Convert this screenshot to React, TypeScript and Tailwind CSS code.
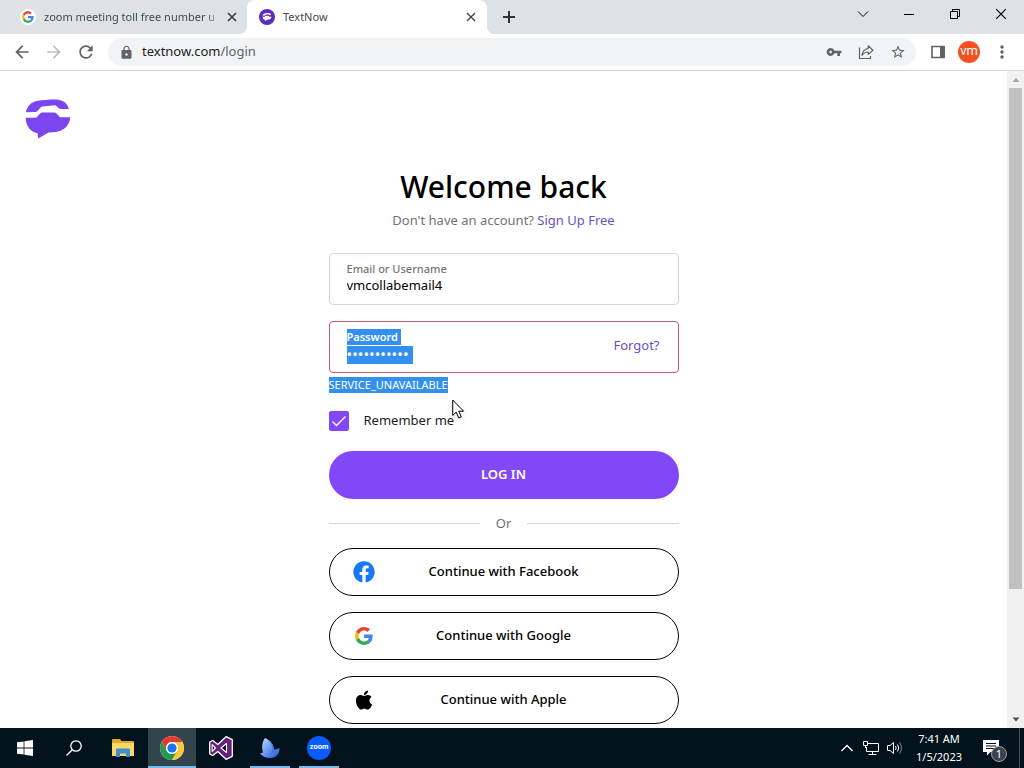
import { useState, type ReactNode } from "react";
import { FaApple, FaFacebook } from "react-icons/fa";
import {
  MdArrowBack,
  MdArrowForward,
  MdLock,
  MdMoreVert,
  MdRefresh,
  MdStarBorder,
  MdVpnKey,
} from "react-icons/md";

function GoogleLogo({ className }: { className: string }) {
  return (
    <svg viewBox="0 0 48 48" className={className} aria-hidden="true">
      <path fill="#EA4335" d="M24 9.5c3.54 0 6.71 1.22 9.21 3.6l6.85-6.85C35.9 2.38 30.47 0 24 0 14.62 0 6.51 5.38 2.56 13.22l7.98 6.19C12.43 13.72 17.74 9.5 24 9.5z" />
      <path fill="#4285F4" d="M46.98 24.55c0-1.57-.15-3.09-.38-4.55H24v9.02h12.94c-.58 2.96-2.26 5.48-4.78 7.18l7.73 6c4.51-4.18 7.09-10.36 7.09-17.65z" />
      <path fill="#FBBC05" d="M10.53 28.59c-.48-1.45-.76-2.99-.76-4.59s.27-3.14.76-4.59l-7.98-6.19C.92 16.46 0 20.12 0 24c0 3.88.92 7.54 2.56 10.78l7.97-6.19z" />
      <path fill="#34A853" d="M24 48c6.48 0 11.93-2.13 15.89-5.81l-7.73-6c-2.15 1.45-4.92 2.3-8.16 2.3-6.26 0-11.57-4.22-13.47-9.91l-7.98 6.19C6.51 42.62 14.62 48 24 48z" />
    </svg>
  );
}

function TextNowMark({ className }: { className: string }) {
  return (
    <svg viewBox="0 0 46 40" className={className} fill="currentColor" aria-hidden="true">
      <path d="M1 13.2C1.800 8 5.800 3 12 2C18 .9 25 .4 31.500 .5C38 .9 42.800 4.600 43.800 10H36C35 10 34.300 9.600 33.600 9L31.300 7Q30.500 6.200 29.500 6.300L17.500 7.400Q16.500 7.500 15.800 8.300L12.300 12.300Q11.500 13.100 10.500 13.100Z" />
      <path d="M.7 18.800H9.500Q11 18.800 11.900 17.900L15.300 14.300Q16 13.600 17 13.600H29.500Q30.500 13.600 31.200 14.300L34.300 17.400Q35.200 18.300 36.700 18.300H45.300C44.800 25.500 39.500 32 31 33L23.500 33.600L13.200 39.400L12.600 34.200C5.500 32.800 1 27.500 .7 18.800Z" />
    </svg>
  );
}

function CloseIcon({ className }: { className: string }) {
  return (
    <svg viewBox="0 0 10 10" className={className} fill="none" stroke="currentColor" aria-hidden="true">
      <path d="M1 1L9 9M9 1L1 9" />
    </svg>
  );
}

function TabStrip() {
  return (
    <div className="flex h-[34px] shrink-0 bg-[#dee1e6] text-[11px] text-[#45494d]">
      <div className="flex w-[239px] items-center pr-0.5 pl-5">
        <GoogleLogo className="mr-2 size-4 shrink-0 rounded-full bg-white p-0.5" />
        <span className="min-w-0 flex-1 whitespace-nowrap [mask-image:linear-gradient(to_right,black_92%,transparent)]">
          zoom meeting toll free number u
        </span>
        <button aria-label="Close tab" className="ml-1.5 text-[#3c4043]">
          <CloseIcon className="size-2.5 stroke-[1.7]" />
        </button>
      </div>
      <span className="size-2 self-end bg-[radial-gradient(circle_at_0_0,transparent_8px,white_8px)]" />
      <div className="flex w-[240px] items-center rounded-t-lg bg-white pr-[11px] pl-3">
        <span className="mr-2 flex size-4 items-center justify-center rounded-full bg-[#5c2db8] text-white">
          <TextNowMark className="h-2 w-2.5" />
        </span>
        <span className="flex-1">TextNow</span>
        <button aria-label="Close tab" className="text-[#3c4043]">
          <CloseIcon className="size-2.5 stroke-[1.3]" />
        </button>
      </div>
      <span className="size-2 self-end bg-[radial-gradient(circle_at_100%_0,transparent_8px,white_8px)]" />
      <button aria-label="New tab" className="flex w-7 items-center justify-center text-[#303337]">
        <svg viewBox="0 0 12 12" className="size-3" stroke="currentColor" strokeWidth="2">
          <path d="M6 0V12M0 6H12" />
        </svg>
      </button>
      <div className="ml-auto flex text-black">
        <button aria-label="Search tabs" className="flex h-7 w-[46px] items-center justify-center">
          <svg viewBox="0 0 12 8" className="h-2 w-3" fill="none" stroke="currentColor">
            <path d="M1 1.500L6 6.500L11 1.500" />
          </svg>
        </button>
        <button aria-label="Minimize" className="flex h-7 w-[46px] items-center justify-center">
          <svg viewBox="0 0 10 10" className="size-2.5" stroke="currentColor"><path d="M0 5.500H10" /></svg>
        </button>
        <button aria-label="Restore" className="flex h-7 w-[46px] items-center justify-center">
          <svg viewBox="0 0 10 10" className="size-2.5" fill="none" stroke="currentColor">
            <path d="M.5 2.500H7.500V9.500H.5ZM2.500 2.500V.5H9.500V7.500H7.500" />
          </svg>
        </button>
        <button aria-label="Close window" className="flex h-7 w-[46px] items-center justify-center">
          <CloseIcon className="size-3" />
        </button>
      </div>
    </div>
  );
}

function Toolbar() {
  return (
    <div className="flex h-[37px] shrink-0 items-center border-b border-[#d8dadc] bg-white px-3 text-[#5f6368]">
      <div className="flex gap-3">
        <button aria-label="Back"><MdArrowBack className="size-5" /></button>
        <button aria-label="Forward" className="text-[#bcbec1]"><MdArrowForward className="size-5" /></button>
        <button aria-label="Reload"><MdRefresh className="size-5" /></button>
      </div>
      <div className="ml-3 flex h-7 flex-1 items-center rounded-full bg-[#f1f3f4] pr-2.5 pl-[11px]">
        <MdLock className="mr-2 size-[15px] shrink-0" />
        <div className="min-w-0 flex-1 text-[13px]" aria-label="Address">
          <span className="text-[#202124]">textnow.com</span>
          <span>/login</span>
        </div>
        <div className="flex items-center gap-4">
          <button aria-label="Saved passwords"><MdVpnKey className="size-4" /></button>
          <button aria-label="Share">
            <svg viewBox="0 0 16 16" className="size-4" fill="none" stroke="currentColor" strokeWidth="1.200">
              <path d="M1.500 3.500V14.500H12.500V12" />
              <path d="M10.200 1.800L15 6.200L10.200 10.400V8C7.500 8 5.500 9 4 11.300C4.400 7.500 6.600 5 10.200 4.500Z" strokeLinejoin="round" />
            </svg>
          </button>
          <button aria-label="Bookmark"><MdStarBorder className="size-4" /></button>
        </div>
      </div>
      <div className="ml-3.5 flex items-center">
        <button aria-label="Side panel">
          <svg viewBox="0 0 16 16" className="size-4">
            <path d="M2 2.500H14V13.500H2Z" fill="white" stroke="currentColor" strokeWidth="1.600" />
            <path d="M10 2H15V14H10Z" fill="currentColor" />
          </svg>
        </button>
        <button aria-label="Profile" className="ml-3 flex size-[22px] items-center justify-center rounded-full bg-[#f4511e] pb-0.5 font-['Roboto',sans-serif] text-[13px] text-white">
          vm
        </button>
        <button aria-label="Menu" className="ml-3"><MdMoreVert className="size-5" /></button>
      </div>
    </div>
  );
}

function ProviderButton({ icon, children }: { icon: ReactNode; children: ReactNode }) {
  return (
    <button
      type="button"
      className="flex h-12 w-full items-center rounded-full border border-black bg-white px-[23px] text-[13px] font-medium text-black"
    >
      <span className="flex w-[22px] justify-center">{icon}</span>
      <span className="flex-1 pr-[22px]">{children}</span>
    </button>
  );
}

function LoginForm() {
  const [name, setName] = useState("vmcollabemail4");
  const [secret, setSecret] = useState("textnowpass");
  const [remember, setRemember] = useState(true);
  return (
    <form className="relative mx-auto w-[350px]" onSubmit={(e) => e.preventDefault()}>
      <h1 className="text-center text-[30px] leading-[40px] font-medium text-black">Welcome back</h1>
      <p className="mt-[3px] text-center text-[13px] leading-5 text-[#737373]">
        Don't have an account? <a href="#signup" className="text-[#6b4fc9]">Sign Up Free</a>
      </p>

      <div className="mt-[23px] flex h-[52px] flex-col rounded border border-[#d6d6d6] px-[17px] pt-[7px]">
        <label htmlFor="name" className="text-[11px] leading-4 font-medium text-[#757575]">Email or Username</label>
        <input
          id="name"
          value={name}
          onChange={(e) => setName(e.target.value)}
          className="h-[18px] w-full text-[13px] text-black outline-none"
        />
      </div>

      <div className="mt-4 flex h-[52px] items-center rounded border border-[#c75a72] pr-[18px] pb-0.5 pl-[17px]">
        <div className="flex flex-1 flex-col items-start">
          <label htmlFor="secret" className="bg-[#3390ee] pr-[3px] text-[11px] leading-4 font-semibold text-white">Password</label>
          <input
            id="secret"
            type="password"
            value={secret}
            onChange={(e) => setSecret(e.target.value)}
            className="mt-px h-[18px] w-[66px] bg-[#3390ee] text-[15px] text-white outline-none"
          />
        </div>
        <a href="#forgot" className="text-[13px] text-[#6b4fc9]">Forgot?</a>
      </div>
      <p className="mt-1 w-fit bg-[#3390ee] text-[11px] leading-4 text-white">SERVICE_UNAVAILABLE</p>

      <label className="mt-[18px] flex h-5 w-fit items-center text-[13px] text-[#1c1c1c]">
        <span className="mr-[15px] grid size-5">
          <input
            type="checkbox"
            checked={remember}
            onChange={(e) => setRemember(e.target.checked)}
            className="peer col-start-1 row-start-1 size-5 appearance-none rounded-[2px] border border-[#8248f8] checked:bg-[#8248f8]"
          />
          <svg viewBox="0 0 20 20" className="pointer-events-none invisible col-start-1 row-start-1 size-5 peer-checked:visible" fill="none" stroke="white" strokeWidth="1.400">
            <path d="M3.500 10.500L7.500 14.500L16.500 5.500" />
          </svg>
        </span>
        Remember me
      </label>

      <button type="submit" className="mt-5 h-12 w-full rounded-full bg-[#8248f8] text-[13px] font-semibold text-white">
        LOG IN
      </button>

      <div className="my-[14px] flex h-[21px] items-center gap-4 text-[13px] text-[#6f6f6f]">
        <span className="h-px flex-1 bg-[#d6d6d6]" />
        Or
        <span className="h-px flex-1 bg-[#d6d6d6]" />
      </div>

      <div className="flex flex-col gap-4">
        <ProviderButton icon={<FaFacebook className="size-[22px] text-[#1877f2]" />}>Continue with Facebook</ProviderButton>
        <ProviderButton icon={<GoogleLogo className="size-[18px]" />}>Continue with Google</ProviderButton>
        <ProviderButton icon={<FaApple className="size-[22px] text-black" />}>Continue with Apple</ProviderButton>
      </div>

      <svg viewBox="0 0 14 21" className="pointer-events-none absolute top-[232px] left-[123px] h-[21px] w-3.5 drop-shadow-md" aria-hidden="true">
        <path d="M.7 1V16.500L4.200 13.100L6.800 19L9.300 17.900L6.700 12.200H11.600Z" fill="white" stroke="black" />
      </svg>
    </form>
  );
}

function ScrollBar() {
  return (
    <div className="flex w-[17px] shrink-0 flex-col items-center bg-[#f1f1f1]" aria-hidden="true">
      <svg viewBox="0 0 16 17" className="h-[17px] w-4"><path d="M4.500 11L8 7L11.500 11Z" fill="#a3a3a3" /></svg>
      <span className="w-[13px] grow-[502] bg-[#c1c1c1]" />
      <span className="grow-[122]" />
      <svg viewBox="0 0 16 17" className="h-[17px] w-4"><path d="M4.500 6.500L8 10.500L11.500 6.500Z" fill="#505050" /></svg>
    </div>
  );
}

function TaskItem({ label, active, running, children }: { label: string; active?: boolean; running?: boolean; children: ReactNode }) {
  return (
    <button
      aria-label={label}
      className={
        "flex items-center justify-center border-b-2 pt-0.5 " +
        (active ? "w-12 bg-[#33444d] " : "w-10 mx-1 ") +
        (running ? "border-[#76b9ed]" : "border-transparent")
      }
    >
      {children}
    </button>
  );
}

function Taskbar() {
  return (
    <div className="flex h-10 shrink-0 bg-[#02131d] text-white">
      <div className="flex gap-px pl-px">
        <TaskItem label="Start">
          <svg viewBox="0 0 16 16" className="size-4" fill="white">
            <path d="M0 2.300L6.600 1.400V7.600H0ZM7.400 1.300L16 0V7.600H7.400ZM0 8.400H6.600V14.600L0 13.700ZM7.400 8.400H16V16L7.400 14.700Z" />
          </svg>
        </TaskItem>
        <TaskItem label="Search">
          <svg viewBox="0 0 16 16" className="size-4" fill="none" stroke="white" strokeWidth="1.300">
            <circle cx="10" cy="6" r="5.200" />
            <path d="M6.300 9.700L.5 15.500" />
          </svg>
        </TaskItem>
        <TaskItem label="File Explorer">
          <svg viewBox="0 0 22 20" className="h-5 w-[22px]">
            <path d="M0 2Q0 1 1 1H8L9.500 3H21Q22 3 22 4V18H0Z" fill="#e3a82b" />
            <path d="M0 5H22V18H0Z" fill="#fbd966" />
            <path d="M4 11.500Q4 10.500 5 10.500H17Q18 10.500 18 11.500V19H14V15.500H8V19H4Z" fill="#3f8fd0" />
          </svg>
        </TaskItem>
        <TaskItem label="Chrome" active running>
          <svg viewBox="0 0 48 48" className="size-6">
            <circle cx="24" cy="24" r="24" fill="#fff" />
            <path d="M24 12H44.780A24 24 0 0 0 3.220 12L13.610 30A12 12 0 0 1 24 12Z" fill="#e33b2e" />
            <path d="M34.390 30L24 48A24 24 0 0 0 44.780 12H24A12 12 0 0 1 34.390 30Z" fill="#fcc934" />
            <path d="M13.610 30L3.220 12A24 24 0 0 0 24 48L34.390 30A12 12 0 0 1 13.610 30Z" fill="#229a50" />
            <circle cx="24" cy="24" r="11.800" fill="#fff" />
            <circle cx="24" cy="24" r="9.200" fill="#1a73e8" />
          </svg>
        </TaskItem>
        <TaskItem label="Visual Studio">
          <svg viewBox="0 0 24 24" className="size-6">
            <path d="M17 .7L23.300 3.700V20.300L17 23.300L8.800 15.500L3.800 19.500L.7 18V6L3.800 4.500L8.800 8.500Z" fill="#68217a" stroke="white" strokeWidth="1.300" strokeLinejoin="round" />
            <path d="M3.200 8.700V15.300L6.500 12ZM12 12L17.500 16.500V7.500Z" fill="#02131d" stroke="white" strokeWidth="1.100" strokeLinejoin="round" />
          </svg>
        </TaskItem>
        <TaskItem label="Bird" running>
          <svg viewBox="0 0 22 22" className="size-[22px]">
            <defs>
              <linearGradient id="wing" x1="0" y1="0" x2="1" y2="1">
                <stop offset="0" stopColor="#c4dcff" />
                <stop offset=".5" stopColor="#6d99f3" />
                <stop offset="1" stopColor="#2a55c8" />
              </linearGradient>
            </defs>
            <path d="M6 1C11 3 14.500 7 15.500 13L20.500 11C21 16.500 17 21 11.500 21C7 21 3.500 19.500 1 16.500L4 15.500C2.500 10.500 3 5 6 1Z" fill="url(#wing)" />
            <path d="M15.500 13C15 15.500 12.500 17.700 9 18C12 17 13.500 15 13.500 12C13.200 8 11 4.500 8.500 2.500C12.500 5 15 8.500 15.500 13Z" fill="#3567da" opacity=".7" />
          </svg>
        </TaskItem>
        <TaskItem label="Zoom" running>
          <span className="flex size-6 items-center justify-center rounded-full bg-[#0b5cff] pb-0.5 font-['Inter',sans-serif] text-[7px] font-bold">
            zoom
          </span>
        </TaskItem>
      </div>

      <div className="ml-auto flex items-center">
        <button aria-label="Show hidden icons">
          <svg viewBox="0 0 12 8" className="h-2 w-3" fill="none" stroke="white" strokeWidth="1.300"><path d="M.5 7L6 1.500L11.500 7" /></svg>
        </button>
        <button aria-label="Network" className="ml-2.5">
          <svg viewBox="0 0 16 16" className="size-4" fill="none" stroke="white">
            <path d="M5 3.500H15.500V11.500H3.500V7M9.500 11.500V14.500M5.500 14.500H13.500M.5 1.500H4.500V5.500H.5ZM2.500 5.500V8" />
          </svg>
        </button>
        <button aria-label="Volume" className="ml-2">
          <svg viewBox="0 0 16 16" className="size-4" fill="none" stroke="white">
            <path d="M.5 5.500H3L6.500 2.500V13.500L3 10.500H.5Z" />
            <path d="M8.500 6Q9.800 8 8.500 10M10.500 4.500Q13 8 10.500 11.500" />
            <path d="M12.500 2.500Q16.500 8 12.500 13.500" opacity=".5" />
          </svg>
        </button>
        <div className="w-[72px] text-center text-[11px] leading-[18px]">
          <div>7:41 AM</div>
          <div>1/5/2023</div>
        </div>
        <button aria-label="1 notification" className="relative ml-2">
          <svg viewBox="0 0 16 16" className="size-4">
            <path d="M0 0H16V12H7.500L4 15.500V12H0Z" fill="white" />
            <path d="M3 3.500H13M3 6H13M3 8.500H13" stroke="#02131d" />
          </svg>
          <span className="absolute top-1.5 left-2 flex size-4 items-center justify-center rounded-full border border-[#9aa0a6] bg-[#3c434a] text-[11px]">
            1
          </span>
        </button>
        <span className="ml-5 h-10 w-[5px] border-l border-[#46525a]" />
      </div>
    </div>
  );
}

export default function App() {
  return (
    <div className="flex h-screen flex-col overflow-hidden bg-white font-['Noto_Sans',sans-serif]">
      <TabStrip />
      <Toolbar />
      <div className="flex min-h-0 flex-1">
        <main className="min-w-0 flex-1 overflow-hidden">
          <header className="px-[25px] pt-7">
            <a href="#home" aria-label="TextNow home" className="block w-fit text-[#7c45f0]">
              <TextNowMark className="h-10 w-[46px]" />
            </a>
          </header>
          <div className="mt-7">
            <LoginForm />
          </div>
        </main>
        <ScrollBar />
      </div>
      <Taskbar />
    </div>
  );
}
